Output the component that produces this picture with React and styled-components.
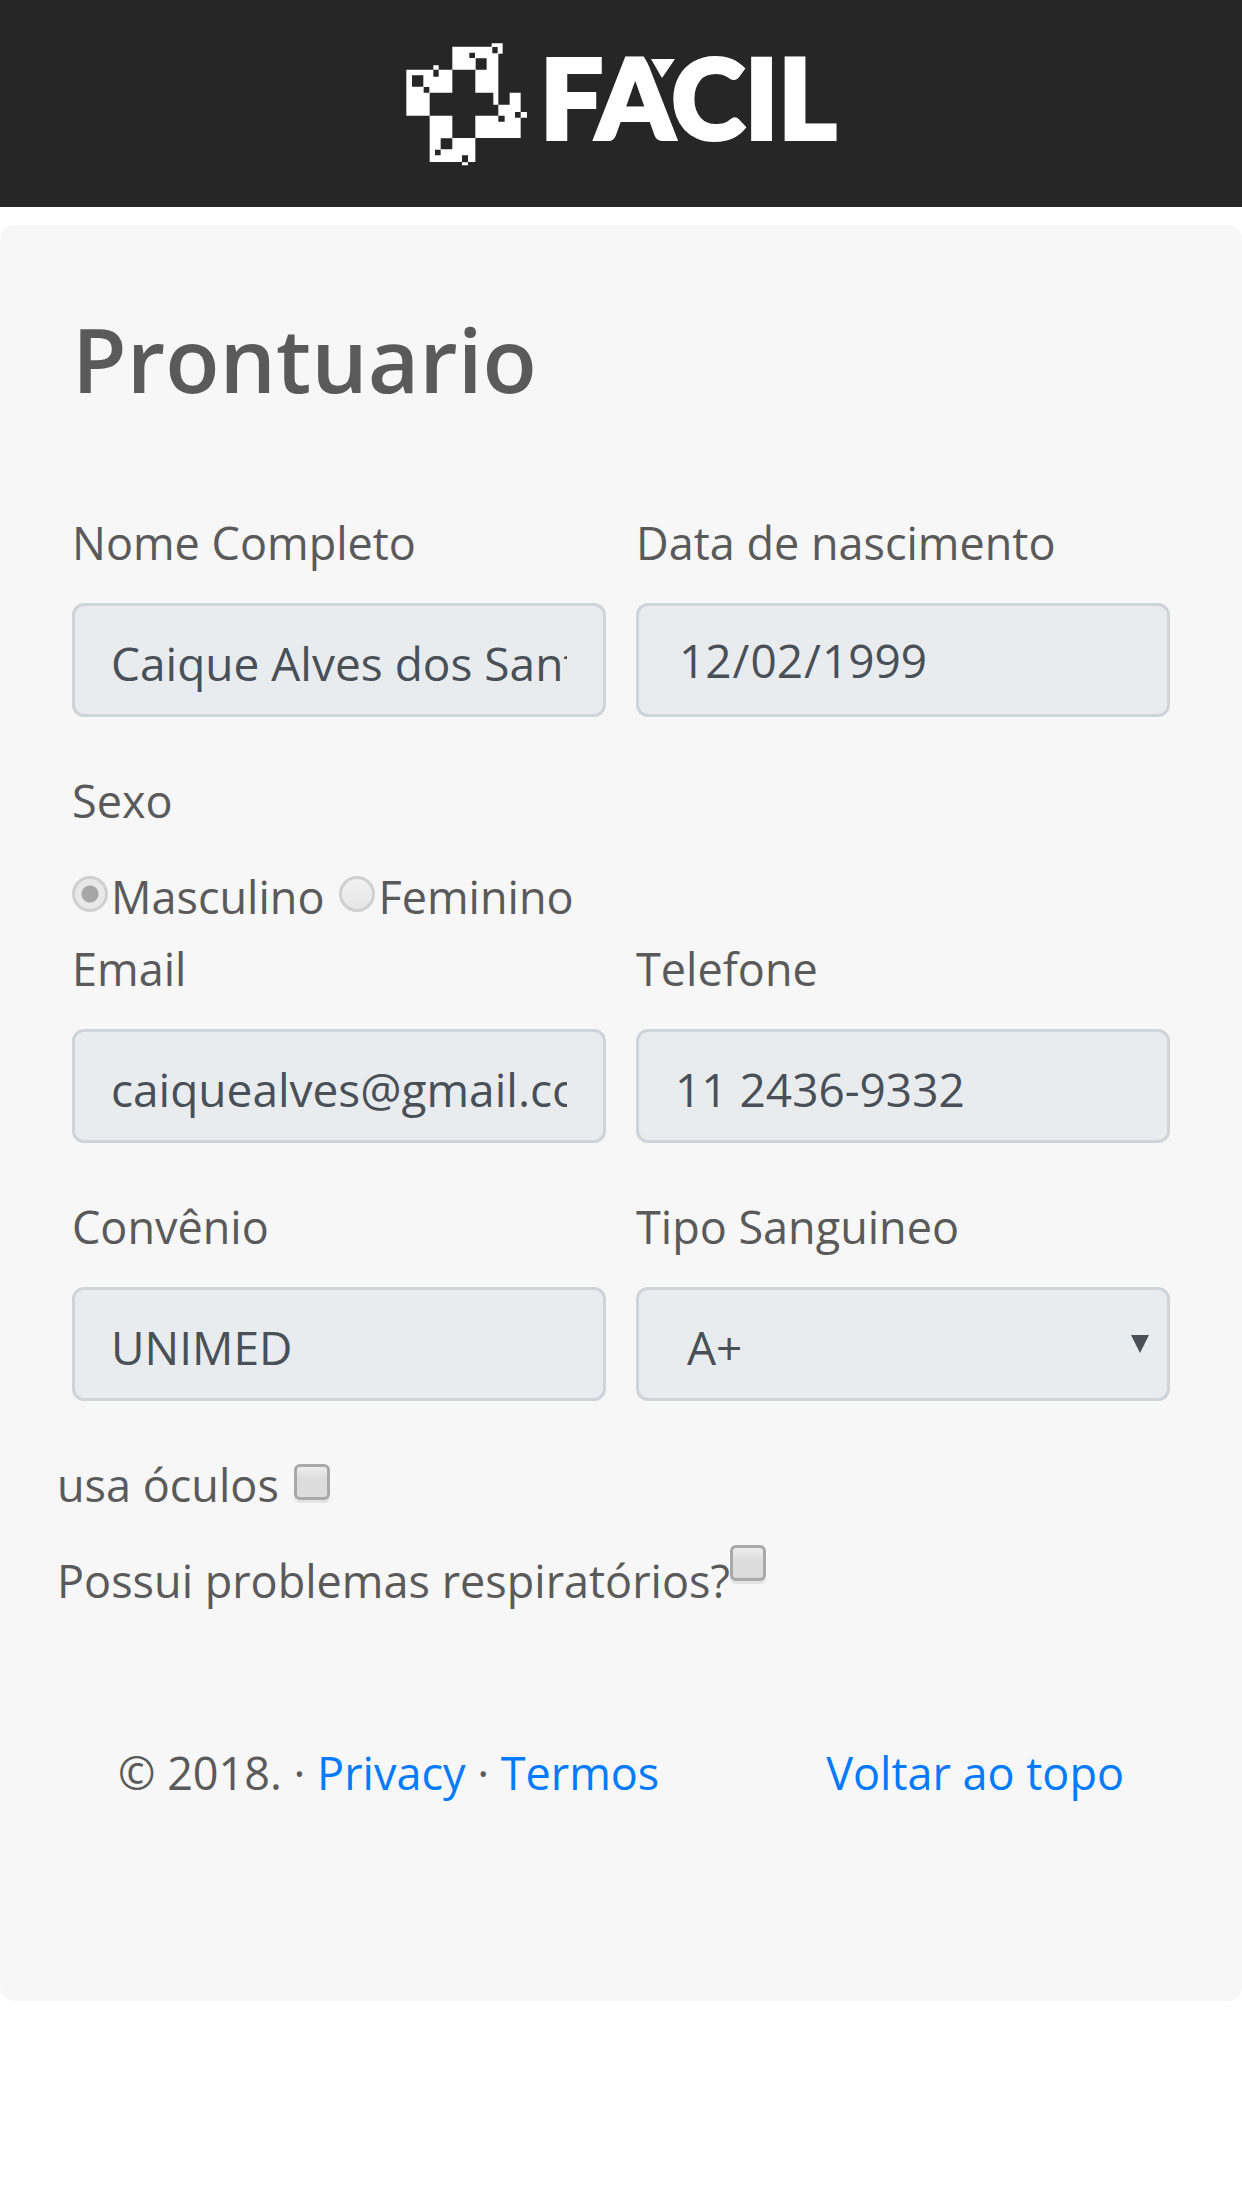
import React from "react";
import styled, { createGlobalStyle, css } from "styled-components";

const GlobalStyle = createGlobalStyle`
  *, *::before, *::after { box-sizing: border-box; }
  body {
    margin: 0;
    background: #fff;
    color: #5a5a5a;
    font-family: "Segoe UI", "Open Sans", "Noto Sans", sans-serif;
    font-size: 45px;
    line-height: 72px;
  }
`;

const Header = styled.header`
  display: flex;
  justify-content: center;
  padding: 42px 0;
  background: #262626;
`;

const HomeLink = styled.a`
  display: block;
`;

const LogoSvg = styled.svg`
  display: block;
  width: 432px;
  height: 123px;
  overflow: visible;
`;

const Wordmark = styled.text`
  font-family: Lato, sans-serif;
  font-size: 111px;
  font-weight: 900;
  fill: #fff;
  stroke: #fff;
  stroke-width: 4px;
`;

const Card = styled.main`
  margin-top: 18px;
  padding: 76px 72px 192px;
  border-radius: 14px;
  background: #f7f7f7;
`;

const Title = styled.h1`
  margin: 0 0 91px;
  font-size: 89px;
  font-weight: 600;
  line-height: 115px;
`;

const Row = styled.div`
  display: grid;
  grid-template-columns: 1fr 1fr;
  gap: 30px;
  margin-bottom: 48px;
`;

const Field = styled.div`
  display: flex;
  flex-direction: column;
  gap: 24px;
  min-width: 0;
`;

const controlStyle = css`
  display: block;
  width: 100%;
  height: 114px;
  margin: 0;
  border: 3px solid #ced4da;
  border-radius: 12px;
  background: #e9ecef;
  color: #495057;
  font: inherit;
  font-size: 46px;
  opacity: 1;
`;

const TextInput = styled.input`
  ${controlStyle}
  padding: 6px 36px 0;
`;

const DateInput = styled.input`
  ${controlStyle}
  padding: 0 39px;
  &::-webkit-calendar-picker-indicator { display: none; }
`;

const SelectBox = styled.div`
  position: relative;
`;

const Select = styled.select`
  ${controlStyle}
  appearance: none;
  padding: 6px 48px 0;
`;

const Arrow = styled.svg`
  position: absolute;
  top: 48px;
  right: 21px;
  width: 18px;
  height: 18px;
  pointer-events: none;
`;

const SexGroup = styled.fieldset`
  margin: 0;
  padding: 0;
  border: 0;
`;

const Legend = styled.legend`
  margin-bottom: 24px;
  padding: 0;
`;

const Options = styled.div`
  display: flex;
  gap: 15px;
`;

const Option = styled.label`
  display: flex;
  gap: 3px;
`;

const Radio = styled.input`
  appearance: none;
  flex: none;
  width: 36px;
  height: 36px;
  margin: 15px 0 0;
  border: 3px solid #d0d0d0;
  border-radius: 50%;
  background: linear-gradient(#f2f2f2, #e6e6e6);
  &:checked {
    background: radial-gradient(circle, #a6a6a6 8px, #e8e8e8 9px);
  }
`;

const Checks = styled.div`
  display: flex;
  flex-direction: column;
  align-items: flex-start;
  gap: 24px;
  margin: 0 -15px;
`;

const CheckLine = styled.label`
  display: flex;
  gap: ${(p) => (p.$spaced ? "15px" : "0")};
`;

const Checkbox = styled.input`
  appearance: none;
  flex: none;
  width: 36px;
  height: 36px;
  margin: ${(p) => (p.$raised ? "0" : "15px 0 0")};
  border: 3px solid #a9a9a9;
  border-radius: 6px;
  background: linear-gradient(#ededed, #dcdcdc 40%);
  box-shadow: 0 3px 0 #e4e4e4;
`;

const Footer = styled.footer`
  display: flex;
  justify-content: space-between;
  margin-top: 120px;
  padding: 0 46px;
`;

const FooterText = styled.p`
  margin: 0;
`;

const Link = styled.a`
  color: #007bff;
  text-decoration: none;
`;

function Logo() {
  return (
    <LogoSvg viewBox="0 0 432 123" role="img" aria-label="Fácil">
      <g transform="translate(1 1) scale(0.3333) translate(-48 -38)">
        <path
          fill="#fff"
          d="M187 49H325V223H310V187H256V118H187ZM305 39H338V70H305ZM49 118H187V187H119V256H49ZM130 105H146V119H130ZM119 256H187V323H256V395H119ZM216 394H234V405H216ZM256 256H325V223H359V187H392V323H256ZM391 245H411V262H391Z"
        />
        <path
          fill="#262626"
          d="M307 50H323V69H307ZM238 67H255V83H238ZM257 84H290V118H257ZM130 118H146V139H130ZM66 135H100V169H66ZM101 170H118V187H101ZM152 324H187V357H152ZM135 358H152V375H135ZM216 375H234V396H216ZM325 256H344V274H325ZM375 245H392V262H375Z"
        />
      </g>
      <Wordmark x="135" y="97">FACIL</Wordmark>
      <path d="M246 17H270L257 36Z" fill="#fff" stroke="#262626" strokeWidth="10" paintOrder="stroke" />
    </LogoSvg>
  );
}

export default function App() {
  return (
    <>
      <GlobalStyle />
      <Header>
        <HomeLink href="#">
          <Logo />
        </HomeLink>
      </Header>
      <Card>
        <Title>Prontuario</Title>
        <form>
          <Row>
            <Field>
              <label htmlFor="nome">Nome Completo</label>
              <TextInput id="nome" type="text" defaultValue="Caique Alves dos Santos" disabled />
            </Field>
            <Field>
              <label htmlFor="nascimento">Data de nascimento</label>
              <DateInput id="nascimento" type="date" defaultValue="1999-12-02" disabled />
            </Field>
          </Row>
          <SexGroup disabled>
            <Legend>Sexo</Legend>
            <Options>
              <Option>
                <Radio type="radio" name="sexo" value="M" defaultChecked />
                Masculino
              </Option>
              <Option>
                <Radio type="radio" name="sexo" value="F" />
                Feminino
              </Option>
            </Options>
          </SexGroup>
          <Row>
            <Field>
              <label htmlFor="email">Email</label>
              <TextInput id="email" type="email" defaultValue="caiquealves@gmail.com" disabled />
            </Field>
            <Field>
              <label htmlFor="telefone">Telefone</label>
              <TextInput id="telefone" type="tel" defaultValue="11 2436-9332" disabled />
            </Field>
          </Row>
          <Row>
            <Field>
              <label htmlFor="convenio">Convênio</label>
              <TextInput id="convenio" type="text" defaultValue="UNIMED" disabled />
            </Field>
            <Field>
              <label htmlFor="sangue">Tipo Sanguineo</label>
              <SelectBox>
                <Select id="sangue" defaultValue="A+" disabled>
                  <option>A+</option>
                </Select>
                <Arrow viewBox="0 0 18 18" aria-hidden="true">
                  <path d="M0 0H18L9 18Z" fill="#495057" />
                </Arrow>
              </SelectBox>
            </Field>
          </Row>
          <Checks>
            <CheckLine $spaced>
              usa óculos
              <Checkbox type="checkbox" disabled />
            </CheckLine>
            <CheckLine>
              Possui problemas respiratórios?
              <Checkbox type="checkbox" $raised disabled />
            </CheckLine>
          </Checks>
        </form>
        <Footer>
          <FooterText>
            © 2018. · <Link href="#">Privacy</Link> · <Link href="#">Termos</Link>
          </FooterText>
          <Link href="#">Voltar ao topo</Link>
        </Footer>
      </Card>
    </>
  );
}
